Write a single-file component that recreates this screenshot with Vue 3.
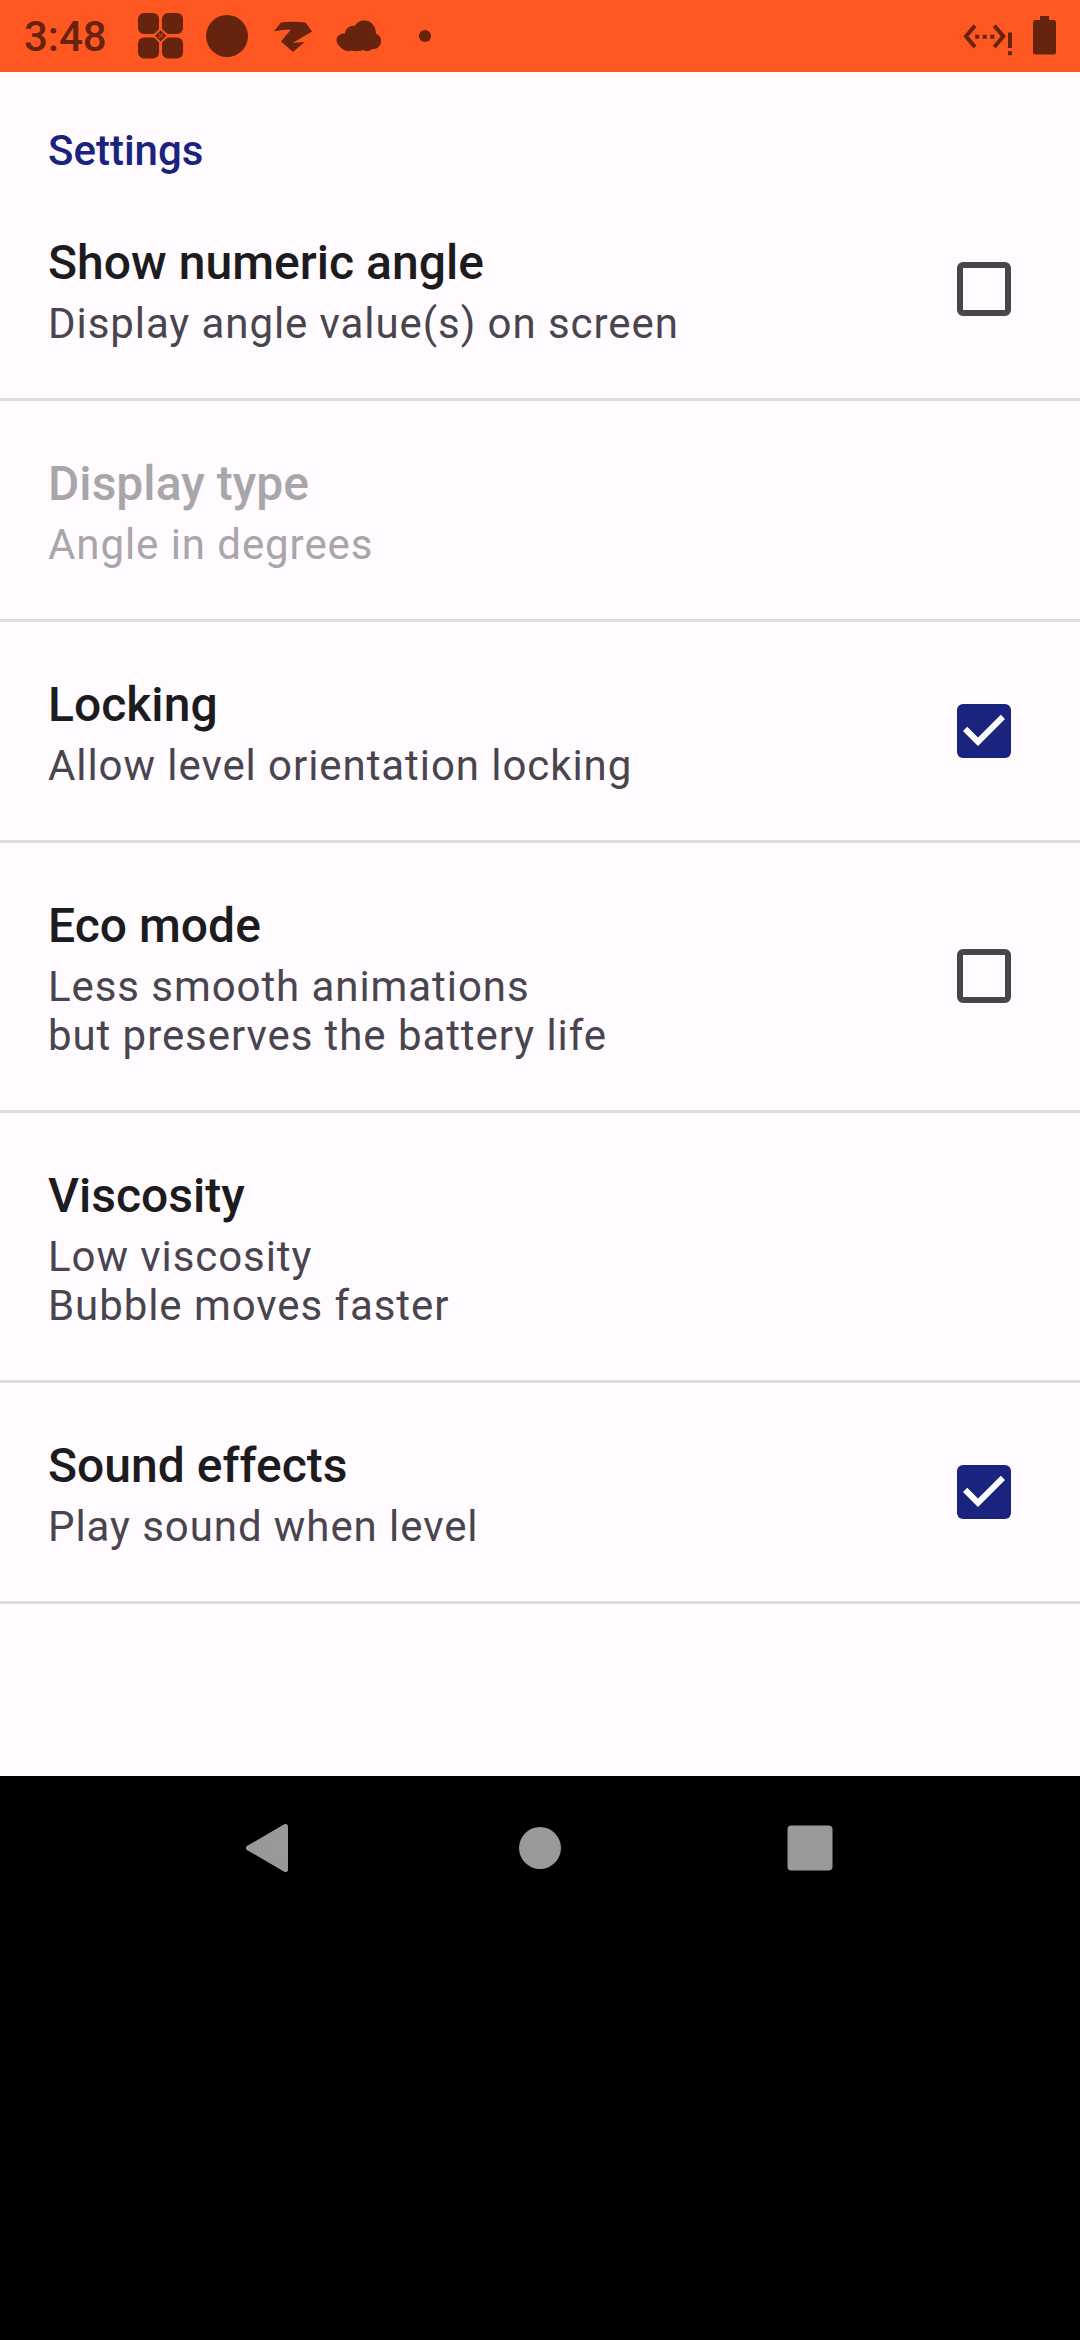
<script setup>
import { ref } from 'vue'

const items = ref([
  { title: 'Show numeric angle', summary: ['Display angle value(s) on screen'], checked: false },
  { title: 'Display type', summary: ['Angle in degrees'], disabled: true },
  { title: 'Locking', summary: ['Allow level orientation locking'], checked: true },
  { title: 'Eco mode', summary: ['Less smooth animations', 'but preserves the battery life'], checked: false },
  { title: 'Viscosity', summary: ['Low viscosity', 'Bubble moves faster'] },
  { title: 'Sound effects', summary: ['Play sound when level'], checked: true },
])

function toggle(item) {
  if (item.checked !== undefined) item.checked = !item.checked
}
</script>

<template>
  <div class="screen">
    <header class="status">
      <span class="clock">3:48</span>
      <svg class="notifications" width="320" height="72" viewBox="130 0 320 72">
        <rect x="138" y="13" width="21" height="21" rx="6" />
        <rect x="162" y="13" width="21" height="21" rx="6" />
        <rect x="138" y="37.500" width="21" height="21" rx="6" />
        <rect x="162" y="37.500" width="21" height="21" rx="6" />
        <path class="gap" d="M160.700 27.500 169 35.800 160.700 44.100 152.400 35.800Z" />
        <path d="M160.700 30.200 166.300 35.800 160.700 41.400 155.100 35.800Z" />
        <path class="cross" d="M158.500 33.600 162.900 38M162.900 33.600 158.500 38" />
        <circle cx="227" cy="36" r="21" />
        <path d="M281 22.500Q293 21 305.500 22.500L312 31.500 292.500 43 304.500 42 293 52 281 41.500 291 29.500Q282 29.500 274 31.200Z" />
        <path d="M345 50.500C340 48 336 43 336.500 39.500C337 35.500 341 33 345 33.500C345 29 350 25 354.500 26C358 21 361.500 20 365.500 20.500C371.500 21 376 27 376 33.500C379.500 35 381.500 38 381 42C380.500 46.500 377 49.500 372.500 49C369 51.500 366 51.500 363 50C360 51.500 354 51.500 351.500 50.500C349 51.500 347 51.500 345 50.500Z" />
        <circle cx="425" cy="36" r="6.100" />
      </svg>
      <svg class="system" width="110" height="72" viewBox="960 0 110 72">
        <path class="chevron" d="M975 25.700 966 36.300 975 47M994.300 25.700 1003.300 36.300 994.300 47" />
        <path d="M975.200 34.700h4v4h-4zM982.700 34.700h4v4h-4zM990.300 34.700h4v4h-4zM1008 32.500h4v15.500h-4zM1008 51.300h4v4h-4z" />
        <path d="M1040 16h9v4h4.500q2.500 0 2.500 2.500v29.500q0 2.500-2.500 2.500h-18q-2.500 0-2.500-2.500v-29.500q0-2.500 2.500-2.500h4.500z" />
      </svg>
    </header>

    <main class="settings">
      <h1 class="category">Settings</h1>
      <ul class="list">
        <li
          v-for="item in items"
          :key="item.title"
          class="row"
          :class="{ disabled: item.disabled }"
          @click="toggle(item)"
        >
          <div class="texts">
            <div class="title">{{ item.title }}</div>
            <div v-for="line in item.summary" :key="line" class="summary">{{ line }}</div>
          </div>
          <span v-if="item.checked !== undefined" class="box" :class="{ checked: item.checked }">
            <svg v-if="item.checked" width="54" height="54" viewBox="3 3 18 18">
              <path d="M10 17l-5-5 1.410-1.410L10 14.170l7.590-7.590L19 8z" />
            </svg>
          </span>
        </li>
      </ul>
    </main>

    <nav class="navbar">
      <svg width="60" height="60" viewBox="0 0 60 60">
        <path class="back" d="M8.500 30 45.500 8.500V51.500Z" />
      </svg>
      <svg width="60" height="60" viewBox="0 0 60 60"><circle cx="30" cy="30" r="21" /></svg>
      <svg width="60" height="60" viewBox="0 0 60 60"><rect x="7.500" y="7.500" width="45" height="45" rx="4" /></svg>
    </nav>
  </div>
</template>

<style>
body {
  margin: 0;
  background: #000;
}
</style>

<style scoped>
.screen {
  width: 1080px;
  height: 2340px;
  display: flex;
  flex-direction: column;
  background: #000;
  font-family: Roboto, sans-serif;
}
svg {
  display: block;
}
.status {
  height: 72px;
  display: flex;
  background: #ff5722;
  color: #66230e;
  fill: #66230e;
}
.clock {
  width: 106px;
  padding-left: 24px;
  font-size: 42px;
  font-weight: 500;
  line-height: 74px;
}
.gap {
  fill: #ff5722;
}
.cross {
  stroke: #b83f18;
  stroke-width: 1.5;
}
.notifications {
  margin-right: auto;
}
.system {
  margin-right: 10px;
}
.chevron {
  fill: none;
  stroke: #66230e;
  stroke-width: 4;
}
.settings {
  height: 1704px;
  background: #fffbff;
}
.category {
  height: 108px;
  margin: 0;
  padding-left: 48px;
  box-sizing: border-box;
  padding-top: 54px;
  color: #1a237e;
  font-size: 42px;
  font-weight: 500;
  line-height: 49px;
}
.list {
  margin: 0;
  padding: 0;
  list-style: none;
}
.row {
  display: flex;
  justify-content: space-between;
  align-items: center;
  padding: 0 69px 0 48px;
  border-bottom: 3px solid #e0dbdf;
}
.texts {
  padding: 55px 0 50px;
}
.title {
  margin-bottom: 8px;
  color: #1c1b1e;
  font-size: 48px;
  font-weight: 500;
  line-height: 56px;
  letter-spacing: 0.03px;
}
.summary {
  color: #49454e;
  font-size: 42px;
  line-height: 49px;
  letter-spacing: 0.93px;
}
.disabled .title {
  color: #a9a6aa;
}
.disabled .summary {
  color: #a9a5aa;
}
.box {
  width: 54px;
  height: 54px;
  margin-bottom: 1px;
  box-sizing: border-box;
  border: 6px solid #49454e;
  border-radius: 6px;
}
.box.checked {
  border: 0;
  background: #1a237e;
  fill: #fff;
}
.navbar {
  height: 144px;
  display: flex;
  justify-content: center;
  align-items: center;
  gap: 210px;
  fill: #999;
}
.back {
  stroke: #999;
  stroke-width: 5;
  stroke-linejoin: round;
}
</style>
